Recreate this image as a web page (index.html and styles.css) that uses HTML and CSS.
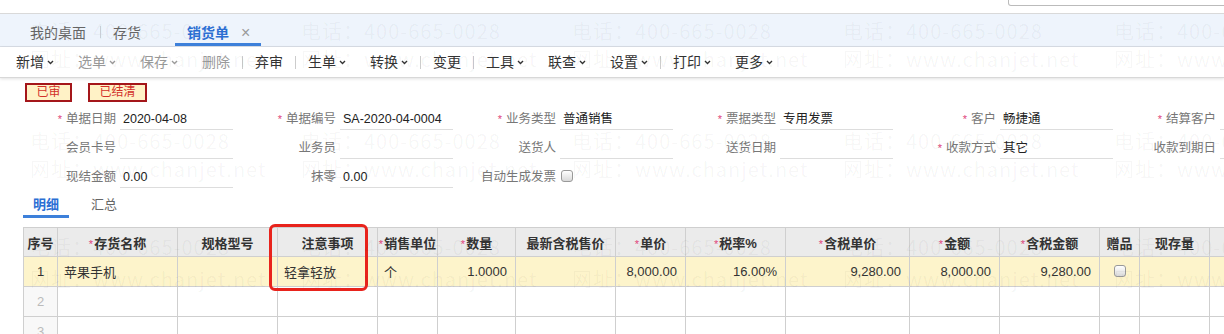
FILE: index.html
```html
<!DOCTYPE html>
<html lang="zh-CN">
<head>
  <meta charset="UTF-8">
  <title>销货单</title>
  <link rel="stylesheet" href="styles.css">
</head>
<body>
<!--顶部搜索条-->
<div class="topbar">
  <div class="search"></div>
</div>

<!--页签-->
<div class="tabs">
  <span class="tab">我的桌面</span>
  <i class="tsep"></i>
  <span class="tab">存货</span>
  <span class="tab current">销货单<i class="close">×</i></span>
</div>

<!--工具栏-->
<div class="toolbar">
  <span class="btn">新增<svg class="arr" viewBox="0 0 8 6"><path d="M1 1.2l3 3 3-3"/></svg></span>
  <span class="btn off">选单<svg class="arr" viewBox="0 0 8 6"><path d="M1 1.2l3 3 3-3"/></svg></span>
  <span class="btn off">保存<svg class="arr" viewBox="0 0 8 6"><path d="M1 1.2l3 3 3-3"/></svg></span>
  <span class="btn off">删除</span>
  <i class="sep"></i>
  <span class="btn">弃审</span>
  <i class="sep"></i>
  <span class="btn">生单<svg class="arr" viewBox="0 0 8 6"><path d="M1 1.2l3 3 3-3"/></svg></span>
  <span class="btn">转换<svg class="arr" viewBox="0 0 8 6"><path d="M1 1.2l3 3 3-3"/></svg></span>
  <i class="sep"></i>
  <span class="btn">变更</span>
  <i class="sep"></i>
  <span class="btn">工具<svg class="arr" viewBox="0 0 8 6"><path d="M1 1.2l3 3 3-3"/></svg></span>
  <span class="btn">联查<svg class="arr" viewBox="0 0 8 6"><path d="M1 1.2l3 3 3-3"/></svg></span>
  <span class="btn">设置<svg class="arr" viewBox="0 0 8 6"><path d="M1 1.2l3 3 3-3"/></svg></span>
  <i class="sep"></i>
  <span class="btn">打印<svg class="arr" viewBox="0 0 8 6"><path d="M1 1.2l3 3 3-3"/></svg></span>
  <span class="btn">更多<svg class="arr" viewBox="0 0 8 6"><path d="M1 1.2l3 3 3-3"/></svg></span>
</div>

<!--单据状态-->
<div class="flags">
  <span class="flag">已审</span>
  <span class="flag">已结清</span>
</div>

<!--表头字段-->
<div class="form">
  <div class="row">
    <div class="field"><label class="label"><em class="req">*</em>单据日期</label><span class="value">2020-04-08</span></div>
    <div class="field"><label class="label"><em class="req">*</em>单据编号</label><span class="value">SA-2020-04-0004</span></div>
    <div class="field"><label class="label"><em class="req">*</em>业务类型</label><span class="value">普通销售</span></div>
    <div class="field"><label class="label"><em class="req">*</em>票据类型</label><span class="value">专用发票</span></div>
    <div class="field"><label class="label"><em class="req">*</em>客户</label><span class="value">畅捷通</span></div>
    <div class="field"><label class="label"><em class="req">*</em>结算客户</label><span class="value"></span></div>
  </div>
  <div class="row">
    <div class="field"><label class="label">会员卡号</label><span class="value"></span></div>
    <div class="field"><label class="label">业务员</label><span class="value"></span></div>
    <div class="field"><label class="label">送货人</label><span class="value"></span></div>
    <div class="field"><label class="label">送货日期</label><span class="value"></span></div>
    <div class="field"><label class="label"><em class="req">*</em>收款方式</label><span class="value">其它</span></div>
    <div class="field"><label class="label">收款到期日</label><span class="value"></span></div>
  </div>
  <div class="row">
    <div class="field"><label class="label">现结金额</label><span class="value">0.00</span></div>
    <div class="field"><label class="label">抹零</label><span class="value">0.00</span></div>
    <div class="field"><label class="label">自动生成发票</label><span class="value plain"><i class="check"></i></span></div>
  </div>
</div>

<!--明细/汇总-->
<div class="subtabs">
  <span class="subtab current">明细</span>
  <span class="subtab">汇总</span>
</div>

<!--明细表格-->
<div class="grid-wrap">
  <table class="grid">
    <colgroup>
      <col style="width:34px"><col style="width:120px"><col style="width:100px"><col style="width:100px">
      <col style="width:60px"><col style="width:78px"><col style="width:100px"><col style="width:70px">
      <col style="width:100px"><col style="width:124px"><col style="width:90px"><col style="width:100px">
      <col style="width:40px"><col style="width:70px"><col style="width:80px">
    </colgroup>
    <thead>
      <tr>
        <th>序号</th>
        <th><em class="req">*</em>存货名称</th>
        <th>规格型号</th>
        <th>注意事项</th>
        <th><em class="req">*</em>销售单位</th>
        <th><em class="req">*</em>数量</th>
        <th>最新含税售价</th>
        <th><em class="req">*</em>单价</th>
        <th><em class="req">*</em>税率%</th>
        <th><em class="req">*</em>含税单价</th>
        <th><em class="req">*</em>金额</th>
        <th><em class="req">*</em>含税金额</th>
        <th>赠品</th>
        <th>现存量</th>
        <th></th>
      </tr>
    </thead>
    <tbody>
      <tr class="selected">
        <td class="idx">1</td>
        <td>苹果手机</td>
        <td></td>
        <td>轻拿轻放</td>
        <td>个</td>
        <td class="num">1.0000</td>
        <td></td>
        <td class="num">8,000.00</td>
        <td class="num">16.00%</td>
        <td class="num">9,280.00</td>
        <td class="num">8,000.00</td>
        <td class="num">9,280.00</td>
        <td class="idx"><i class="check"></i></td>
        <td></td>
        <td></td>
      </tr>
      <tr class="empty">
        <td class="idx">2</td>
        <td></td><td></td><td></td><td></td><td></td><td></td><td></td>
        <td></td><td></td><td></td><td></td><td></td><td></td><td></td>
      </tr>
      <tr class="empty">
        <td class="idx">3</td>
        <td></td><td></td><td></td><td></td><td></td><td></td><td></td>
        <td></td><td></td><td></td><td></td><td></td><td></td><td></td>
      </tr>
    </tbody>
  </table>
  <div class="mark"></div>
</div>

<!--水印-->
<div class="wm wm-a">
  <div class="wm-item"><p>电话：400-665-0028</p><p>网址：www.chanjet.net</p></div>
  <div class="wm-item"><p>电话：400-665-0028</p><p>网址：www.chanjet.net</p></div>
  <div class="wm-item"><p>电话：400-665-0028</p><p>网址：www.chanjet.net</p></div>
  <div class="wm-item"><p>电话：400-665-0028</p><p>网址：www.chanjet.net</p></div>
  <div class="wm-item"><p>电话：400-665-0028</p><p>网址：www.chanjet.net</p></div>
</div>
<div class="wm wm-b">
  <div class="wm-item"><p>电话：400-665-0028</p><p>网址：www.chanjet.net</p></div>
  <div class="wm-item"><p>电话：400-665-0028</p><p>网址：www.chanjet.net</p></div>
  <div class="wm-item"><p>电话：400-665-0028</p><p>网址：www.chanjet.net</p></div>
  <div class="wm-item"><p>电话：400-665-0028</p><p>网址：www.chanjet.net</p></div>
  <div class="wm-item"><p>电话：400-665-0028</p><p>网址：www.chanjet.net</p></div>
</div>
<div class="wm wm-c">
  <div class="wm-item"><p>电话：400-665-0028</p><p>网址：www.chanjet.net</p></div>
  <div class="wm-item"><p>电话：400-665-0028</p><p>网址：www.chanjet.net</p></div>
  <div class="wm-item"><p>电话：400-665-0028</p><p>网址：www.chanjet.net</p></div>
  <div class="wm-item"><p>电话：400-665-0028</p><p>网址：www.chanjet.net</p></div>
  <div class="wm-item"><p>电话：400-665-0028</p><p>网址：www.chanjet.net</p></div>
</div>
</body>
</html>
```

FILE: styles.css
```css
* {
  margin: 0;
  padding: 0;
  box-sizing: border-box;
}
body {
  position: relative;
  width: 1224px;
  height: 334px;
  overflow: hidden;
  background: #fff;
  color: #333;
  font-family: "Liberation Sans", "Noto Sans CJK SC", sans-serif;
}
em, i {
  font-style: normal;
}

/* 顶部 */
.topbar {
  display: flex;
  justify-content: flex-end;
  height: 14px;
  border-bottom: 1px solid #d9d9d9;
}
.search {
  width: 220px;
  height: 6px;
  margin-right: -4px;
  border: 1px solid #bbb;
  border-top: 0;
  border-radius: 0 0 0 3px;
}

/* 页签 */
.tabs {
  display: flex;
  height: 33px;
  padding-left: 18px;
  background: #eef4fc;
  border-bottom: 1px solid #d9dee6;
}
.tab {
  height: 32px;
  padding: 9px 12px 0;
  line-height: 20px;
  font-size: 14px;
  color: #666;
  border-bottom: 3px solid transparent;
  white-space: nowrap;
}
.tsep {
  align-self: center;
  width: 1px;
  height: 12px;
  margin: 3px 0 0 2px;
  background: #cfd5dd;
}
.tab + .tab {
  padding-left: 10px;
}
.tab.current {
  margin-left: 22px;
  padding: 9px 11px 0 12px;
  color: #2b6fd4;
  font-weight: bold;
  border-bottom-color: #3d80da;
}
.close {
  margin-left: 12px;
  font-size: 16px;
  font-weight: normal;
  color: #9a9a9a;
}

/* 工具栏 */
.toolbar {
  display: flex;
  align-items: center;
  height: 31px;
  padding-left: 4px;
  font-size: 14px;
  border-bottom: 1px solid #d8d8d8;
  box-shadow: 0 1px 3px rgba(0, 0, 0, .12);
}
.btn {
  display: flex;
  align-items: center;
  padding: 0 12px;
  line-height: 30px;
  color: #333;
  white-space: nowrap;
}
.btn.off {
  color: #9a9a9a;
}
.arr {
  width: 7px;
  height: 5px;
  margin-left: 3px;
  fill: none;
  stroke: currentColor;
  stroke-width: 1.6;
}
.sep {
  width: 1px;
  height: 13px;
  background: #ccc;
}

/* 状态 */
.flags {
  display: flex;
  gap: 16px;
  padding: 5px 0 0 25px;
}
.flag {
  height: 19px;
  padding: 0 9.5px;
  line-height: 15px;
  font-size: 12px;
  color: #d2302a;
  background: #fff2c6;
  border: 2px solid #a4161a;
}

/* 表头字段 */
.form {
  margin-top: -1px;
  padding-left: 13px;
  font-size: 12.5px;
}
.row {
  display: flex;
  height: 29px;
}
.field {
  display: flex;
  flex: none;
  width: 220px;
}
.label {
  width: 107px;
  padding: 8px 4px 0 0;
  line-height: 20px;
  text-align: right;
  color: #777;
  white-space: nowrap;
}
.req {
  margin-right: 4px;
  font-size: 11px;
  color: #e0457b;
}
.value {
  width: 113px;
  height: 29px;
  padding: 8px 0 0 3px;
  line-height: 20px;
  color: #222;
  border-bottom: 1px solid #ddd;
  white-space: nowrap;
}
.value.plain {
  border-bottom: 0;
  padding-left: 1px;
}
.check {
  display: inline-block;
  width: 12px;
  height: 12px;
  vertical-align: -1px;
  border: 1px solid #999;
  border-radius: 3px;
  background: linear-gradient(#fff, #d9d9d9);
}

/* 明细/汇总 */
.subtabs {
  display: flex;
  gap: 12px;
  padding: 7px 0 0 23px;
}
.subtab {
  padding: 0 10px;
  line-height: 20px;
  font-size: 13px;
  color: #666;
  border-bottom: 3px solid transparent;
}
.subtab.current {
  color: #2b6fd4;
  font-weight: bold;
  border-bottom-color: #3d80da;
}

/* 表格 */
.grid-wrap {
  position: relative;
  width: 1267px;
  margin: 9px 0 0 23px;
}
.grid {
  width: 1267px;
  table-layout: fixed;
  border-collapse: collapse;
  font-size: 13px;
}
.grid th,
.grid td {
  border: 1px solid #cfcfcf;
  white-space: nowrap;
  overflow: hidden;
}
.grid th {
  height: 29px;
  background: #ebebeb;
  font-weight: bold;
  color: #333;
  text-align: center;
}
.grid th .req {
  margin-right: 1px;
  font-weight: normal;
}
.grid td {
  height: 30px;
  padding: 0 8px 0 6px;
  color: #333;
}
.grid td.idx {
  padding: 0;
  text-align: center;
}
.grid td.num {
  text-align: right;
}
.grid tr.selected td {
  background: #fdf4cb;
}
.grid tr.empty td.idx {
  color: #bbb;
  background: #f8f8f8;
}
.mark {
  position: absolute;
  left: 246px;
  top: -3px;
  width: 99px;
  height: 67px;
  border: 3px solid #e8231c;
  border-radius: 6px;
}

/* 水印 */
.wm {
  position: absolute;
  left: 30px;
  display: flex;
  pointer-events: none;
  font-family: "Noto Sans CJK SC", sans-serif;
  font-size: 20px;
  line-height: 28px;
  letter-spacing: 1px;
  color: rgba(0, 0, 0, .045);
  white-space: nowrap;
}
.wm-item {
  flex: none;
  width: 271px;
}
.wm-a {
  top: 17px;
}
.wm-b {
  top: 127px;
}
.wm-c {
  top: 231px;
  line-height: 32px;
}
```
